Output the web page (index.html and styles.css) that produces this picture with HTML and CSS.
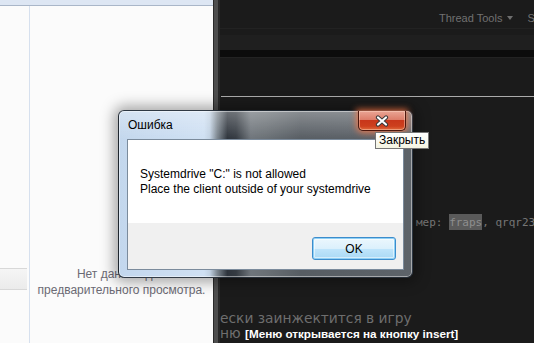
FILE: index.html
```html
<!DOCTYPE html>
<html lang="ru">
<head>
    <meta charset="UTF-8">
    <meta name="viewport" content="width=device-width, initial-scale=1.0">
    <title>Ошибка</title>
    <link rel="stylesheet" href="styles.css">
</head>
<body>
    <div class="screen">
        <div class="explorer">
            <div class="explorer-top"></div>
            <div class="explorer-body">
                <div class="nav"><div class="nav-bar"></div></div>
                <div class="preview">Нет данных для<br>предварительного просмотра.</div>
            </div>
        </div>
        <div class="edge"></div>
        <div class="forum">
            <div class="forum-head">
                <span class="tool">Thread Tools <i class="caret"></i></span>
                <span class="tool">Search Thread</span>
            </div>
            <div class="band"></div>
            <div class="band-dark"></div>
            <div class="rule"></div>
            <div class="post">
                <p class="code-line">мер: <span class="hl">fraps</span>, qrqr23</p>
                <p class="post-line">ески заинжектится в игру</p>
                <p class="post-line last">ню <b>[Меню открывается на кнопку insert]</b></p>
            </div>
        </div>

        <div class="dialog">
            <div class="title">
                <span class="title-text">Ошибка</span>
                <div class="close">
                    <svg width="16" height="12" viewBox="0 0 16 12">
                        <path d="M4 2.5 L12 9.5 M12 2.5 L4 9.5" stroke="#3a3a3a" stroke-width="4.2" stroke-linecap="round"/>
                        <path d="M4 2.5 L12 9.5 M12 2.5 L4 9.5" stroke="#ffffff" stroke-width="2.2" stroke-linecap="round"/>
                    </svg>
                </div>
            </div>
            <div class="content">
                <div class="message">
                    Systemdrive "C:" is not allowed<br>
                    Place the client outside of your systemdrive
                </div>
                <div class="footer">
                    <button class="btn">OK</button>
                </div>
            </div>
        </div>
        <div class="tooltip">Закрыть</div>
    </div>
</body>
</html>
```

FILE: styles.css
```css
* { box-sizing: border-box; }
body { margin: 0; font-family: "Liberation Sans", Arial, sans-serif; font-size: 12px; background: #1b1b1b; }
.screen { position: relative; display: flex; width: 534px; height: 343px; overflow: hidden; }

/* explorer window on the left */
.explorer { width: 213px; flex: none; background: #fbfbfb; display: flex; flex-direction: column; }
.explorer-top { height: 6px; background: #dde6f3; border-bottom: 1px solid #a9b6c8; }
.explorer-body { flex: 1; display: grid; grid-template-columns: 30px 1fr; }
.nav { border-right: 1px solid #d6e0ee; padding-top: 262px; }
.nav-bar { width: 27px; height: 22px; border-top: 1px solid #d8d8d8; border-bottom: 1px solid #d8d8d8; background: linear-gradient(#f5f5f5, #ebebeb); }
.preview { padding-top: 260px; text-align: center; line-height: 16px; color: #6b6a74; }
.edge { width: 7px; flex: none; background: #4e4e4e; border-left: 1px solid #2a2a2a; border-right: 2px solid #282828; }

/* forum page */
.forum { flex: 1; min-width: 0; overflow: hidden; background: #1b1b1b; }
.forum-head { height: 29px; border-bottom: 1px solid #222; padding: 8px 0 0 219px; display: flex; gap: 14px; white-space: nowrap; line-height: 13px; font-size: 11px; color: #717171; }
.tool { display: flex; align-items: center; }
.caret { display: inline-block; margin-left: 5px; border-left: 3.5px solid transparent; border-right: 3.5px solid transparent; border-top: 4px solid #6e6e6e; }
.band { margin-top: 6px; height: 15px; background: #1f1f1f; }
.band-dark { height: 8px; background: #0c0c0c; border-bottom: 1px solid #232323; }
.rule { margin: 38px 0 0 1px; height: 1px; background: #ababab; }
.post { color: #6e6e6e; white-space: nowrap; }
.post p { margin: 0; }
.code-line { margin-top: 118px !important; margin-left: 196px !important; font-family: "DejaVu Sans Mono", monospace; font-size: 11px; line-height: 16px; color: #767676; }
.hl { background: #5a5a5a; color: #8e8e8e; padding: 2px 0 1px; }
.post-line { margin-top: 79px !important; font-family: "DejaVu Sans", Verdana, sans-serif; font-size: 13.8px; line-height: 16px; }
.post-line.last { margin-top: 0 !important; line-height: 15px; }
.post-line b { font-family: "Liberation Sans", Arial, sans-serif; font-size: 11.7px; color: #fff; }

/* message box */
.dialog { position: absolute; left: 118px; top: 110px; width: 295px; height: 168px; padding: 0 8px 7px; display: flex; flex-direction: column; border: 1px solid rgba(20, 28, 38, 0.85); border-radius: 6px;
    background:
        linear-gradient(rgba(255, 255, 255, 0.3), rgba(255, 255, 255, 0) 28px),
        linear-gradient(to right, #c3d7ed 0, #cfe0f3 29%, #c2d2e3 31%, #7d8790 33.5%, #2e343c 37%, #353b42 40%, #6f757b 45%, #6a7075 50%, #575d63 62%, #5d6369 100%);
    box-shadow: 0 0 14px 4px rgba(0, 0, 0, 0.35), inset 0 0 0 1px rgba(255, 255, 255, 0.45); }
.title { height: 28px; display: flex; justify-content: space-between; align-items: flex-start; }
.title-text { padding: 7px 0 0 1px; line-height: 15px; color: #000; }
.close { width: 48px; height: 20px; margin-right: -2px; display: flex; align-items: center; justify-content: center; border: 1px solid #4d160c; border-top: none; border-radius: 0 0 5px 5px;
    background: linear-gradient(#eaa595 0%, #dd7e6a 45%, #c8361a 50%, #cd3f1d 80%, #e06a3c 100%);
    box-shadow: 0 0 6px 2px rgba(255, 120, 70, 0.75), inset 0 0 0 1px rgba(255, 220, 200, 0.45); }
.content { flex: 1; display: flex; flex-direction: column; border: 1px solid #7b8b9c; background: #f0f0f0; }
.message { height: 83px; padding: 27px 0 0 12px; background: #fff; line-height: 15px; color: #000; }
.footer { flex: 1; display: flex; justify-content: flex-end; align-items: flex-start; padding: 14px 7px 0 0; }
.btn { width: 84px; height: 23px; padding: 0; font: 12px "Liberation Sans", Arial, sans-serif; color: #000; border: 1px solid #3c8ccc; border-radius: 3px;
    background: linear-gradient(#ecf7fd 0%, #dbf0fc 50%, #c0e5fb 51%, #a9d9f5 100%);
    box-shadow: inset 0 0 0 1px #8fd0f5, inset 0 0 0 2px rgba(255, 255, 255, 0.5); }

/* tooltip over the close button */
.tooltip { position: absolute; left: 375px; top: 132px; height: 17px; padding: 0 3px; line-height: 15px; border: 1px solid #767676; background: linear-gradient(#ffffff, #f4f4e2); color: #000; }
```
